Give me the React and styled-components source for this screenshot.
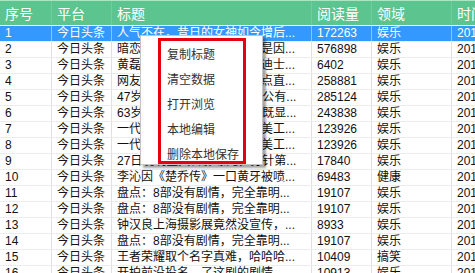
import styled, { createGlobalStyle } from "styled-components";

const GlobalStyle = createGlobalStyle`
  body {
    margin: 0;
    overflow: hidden;
    background: #ffffff;
    font-family: "Liberation Sans", "Noto Sans CJK SC", sans-serif;
  }
`;

const columns = ["序号", "平台", "标题", "阅读量", "领域", "时间"];

const rows = [
  ["1", "今日头条", "人气不在，昔日的女神如今增后...", "172263", "娱乐"],
  ["2", "今日头条", "暗恋她十年终于在一起，只是因...", "576898", "娱乐"],
  ["3", "今日头条", "黄磊带女儿多多去玩了一次迪士...", "6402", "娱乐"],
  ["4", "今日头条", "网友偶遇女星在街头吃饭，点直...", "258881", "娱乐"],
  ["5", "今日头条", "47岁女星素颜现身机场，被公有...", "285124", "娱乐"],
  ["6", "今日头条", "63岁老戏骨近况曝光，令人既显...", "243838", "娱乐"],
  ["7", "今日头条", "一代名伶晚年生活曝光，竟美工...", "123926", "娱乐"],
  ["8", "今日头条", "一代名伶晚年生活曝光，竟美工...", "123926", "娱乐"],
  ["9", "今日头条", "27日晚明星大合影曝光，打针第...", "17840", "娱乐"],
  ["10", "今日头条", "李沁因《楚乔传》一口黄牙被喷...", "69483", "健康"],
  ["11", "今日头条", "盘点：8部没有剧情，完全靠明...", "19107", "娱乐"],
  ["12", "今日头条", "盘点：8部没有剧情，完全靠明...", "19107", "娱乐"],
  ["13", "今日头条", "钟汉良上海摄影展竟然没宣传，...", "8933", "娱乐"],
  ["14", "今日头条", "盘点：8部没有剧情，完全靠明...", "19107", "娱乐"],
  ["15", "今日头条", "王者荣耀取个名字真难，哈哈哈...", "10409", "搞笑"],
  ["16", "今日头条", "开拍前没投名，了这剧的剧情...", "10913", "娱乐"],
];

const menuItems = ["复制标题", "清空数据", "打开浏览", "本地编辑", "删除本地保存"];

function App() {
  return (
    <>
      <GlobalStyle />
      <Table>
        <HeaderRow>
          {columns.map((c) => (
            <HeaderCell key={c}>{c}</HeaderCell>
          ))}
        </HeaderRow>
        {rows.map((r, i) => (
          <Row key={r[0]} selected={i === 0}>
            {r.map((v, j) => (
              <Cell key={j}>{v}</Cell>
            ))}
            <Cell>2017-06-21 10:23</Cell>
          </Row>
        ))}
        <Menu>
          <Marked>
            {menuItems.map((m) => (
              <MenuItem key={m}>{m}</MenuItem>
            ))}
          </Marked>
        </Menu>
      </Table>
    </>
  );
}

export default App;

const Table = styled.div`
  position: relative;
  width: 532px;
`;

const gridColumns = "52px 60px 200px 60px 80px 80px";

const HeaderRow = styled.div`
  display: grid;
  grid-template-columns: ${gridColumns};
  height: 26px;
  border-top: 1px solid #a8e6c4;
  border-bottom: 1px solid #ffffff;
  box-sizing: border-box;
  background: #5cc48e;
  color: #ffffff;
  font-family: "Noto Sans CJK SC", sans-serif;
  font-size: 14px;
  line-height: 24px;
`;

const HeaderCell = styled.div`
  padding-left: 5px;
  border-right: 1px solid #72cd9d;
  overflow: hidden;
  white-space: nowrap;
`;

const Row = styled.div`
  display: grid;
  grid-template-columns: ${gridColumns};
  height: 16px;
  box-sizing: border-box;
  border-bottom: 1px solid #ececec;
  background: ${({ selected }) => (selected ? "#3399ff" : "#ffffff")};
  color: ${({ selected }) => (selected ? "#ffffff" : "#111111")};
  font-size: 12px;
  line-height: 15px;

  & > div {
    border-right-color: ${({ selected }) => (selected ? "#8cc4ff" : "#e0e0e0")};
  }
`;

const Cell = styled.div`
  padding-left: 5px;
  border-right: 1px solid #e0e0e0;
  overflow: hidden;
  white-space: nowrap;
`;

const Menu = styled.div`
  position: absolute;
  left: 140px;
  top: 35px;
  width: 123px;
  height: 130px;
  box-sizing: border-box;
  background: #ffffff;
  border: 1px solid #c4c4c4;
  box-shadow: 3px 3px 2px rgba(0, 0, 0, 0.35);
`;

const Marked = styled.div`
  margin: 2px 0 0 17px;
  width: 88px;
  height: 126px;
  box-sizing: border-box;
  border: 3px solid #e60012;
`;

const MenuItem = styled.div`
  height: 25px;
  padding-left: 6px;
  line-height: 25px;
  color: #333333;
  font-family: "Noto Sans CJK SC", sans-serif;
  font-size: 12px;
  white-space: nowrap;
`;
